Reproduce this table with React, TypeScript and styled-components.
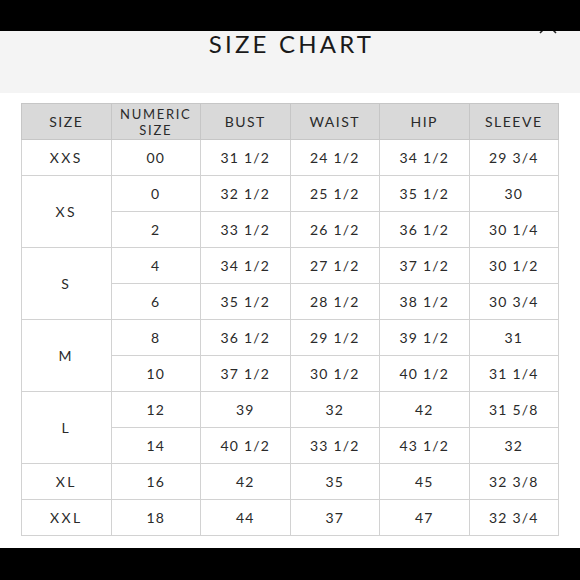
import React from "react";
import styled, { createGlobalStyle } from "styled-components";

const Global = createGlobalStyle`
  html, body { margin: 0; padding: 0; background: #ffffff; }
  body { width: 580px; height: 580px; overflow: hidden; font-family: "Lato", "Noto Sans", sans-serif; }
`;

const Page = styled.div`
  width: 580px;
  height: 580px;
  display: flex;
  flex-direction: column;
  background: #ffffff;
`;

const BlackBar = styled.div<{ $h: number }>`
  height: ${(p) => p.$h}px;
  background: #000;
  flex: none;
  position: relative;
  z-index: 2;
`;

const Header = styled.div`
  position: relative;
  height: 62px;
  flex: none;
  background: #f4f4f4;
  display: flex;
  justify-content: center;
  align-items: flex-start;
`;

const Title = styled.h1`
  margin: 0;
  font-family: "Lato", "Noto Sans", sans-serif;
  font-weight: 400;
  font-size: 24px;
  line-height: 26px;
  letter-spacing: 3.2px;
  padding-left: 3px;
  color: #1a1a1a;
`;

const Close = styled.svg`
  position: absolute;
  right: 22px;
  top: -16px;
  width: 20px;
  height: 20px;
  z-index: 1;
`;

const Content = styled.div`
  flex: 1;
  padding: 10px 0 0 21px;
`;

const Table = styled.table`
  border-collapse: collapse;
  width: 538px;
  table-layout: fixed;
  font-family: "Lato", "Noto Sans", sans-serif;
  color: #2a2a2a;
`;

const Th = styled.th`
  background: #d9d9d9;
  border: 1px solid #c6c6c6;
  height: 35px;
  padding: 0;
  font-weight: 400;
  font-size: 14px;
  line-height: 16px;
  letter-spacing: 1.5px;
  text-align: center;
  vertical-align: middle;
`;

const HeadLine = styled.span`
  display: block;
  font-size: 13px;
  line-height: 16px;
  letter-spacing: 1.7px;
`;

const Td = styled.td`
  border: 1px solid #d2d2d2;
  height: 35px;
  padding: 0;
  font-size: 14px;
  letter-spacing: 1.2px;
  text-align: center;
  vertical-align: middle;
`;

const SizeTd = styled(Td)`
  letter-spacing: 2.4px;
`;

type Row = { size?: string; span?: number; vals: string[] };

const rows: Row[] = [
  { size: "XXS", span: 1, vals: ["00", "31 1/2", "24 1/2", "34 1/2", "29 3/4"] },
  { size: "XS", span: 2, vals: ["0", "32 1/2", "25 1/2", "35 1/2", "30"] },
  { vals: ["2", "33 1/2", "26 1/2", "36 1/2", "30 1/4"] },
  { size: "S", span: 2, vals: ["4", "34 1/2", "27 1/2", "37 1/2", "30 1/2"] },
  { vals: ["6", "35 1/2", "28 1/2", "38 1/2", "30 3/4"] },
  { size: "M", span: 2, vals: ["8", "36 1/2", "29 1/2", "39 1/2", "31"] },
  { vals: ["10", "37 1/2", "30 1/2", "40 1/2", "31 1/4"] },
  { size: "L", span: 2, vals: ["12", "39", "32", "42", "31 5/8"] },
  { vals: ["14", "40 1/2", "33 1/2", "43 1/2", "32"] },
  { size: "XL", span: 1, vals: ["16", "42", "35", "45", "32 3/8"] },
  { size: "XXL", span: 1, vals: ["18", "44", "37", "47", "32 3/4"] },
];

export default function App() {
  return (
    <Page>
      <Global />
      <BlackBar $h={31} />
      <Header>
        <Close viewBox="0 0 20 20">
          <path d="M2 2 L18 18 M18 2 L2 18" stroke="#222" strokeWidth="1.6" fill="none" />
        </Close>
        <Title>SIZE CHART</Title>
      </Header>
      <Content>
        <Table>
          <thead>
            <tr>
              <Th>SIZE</Th>
              <Th>
                <HeadLine>NUMERIC</HeadLine>
                <HeadLine>SIZE</HeadLine>
              </Th>
              <Th>BUST</Th>
              <Th>WAIST</Th>
              <Th>HIP</Th>
              <Th>SLEEVE</Th>
            </tr>
          </thead>
          <tbody>
            {rows.map((r, i) => (
              <tr key={i}>
                {r.size && <SizeTd rowSpan={r.span}>{r.size}</SizeTd>}
                {r.vals.map((v, j) => (
                  <Td key={j}>{v}</Td>
                ))}
              </tr>
            ))}
          </tbody>
        </Table>
      </Content>
      <BlackBar $h={32} />
    </Page>
  );
}
